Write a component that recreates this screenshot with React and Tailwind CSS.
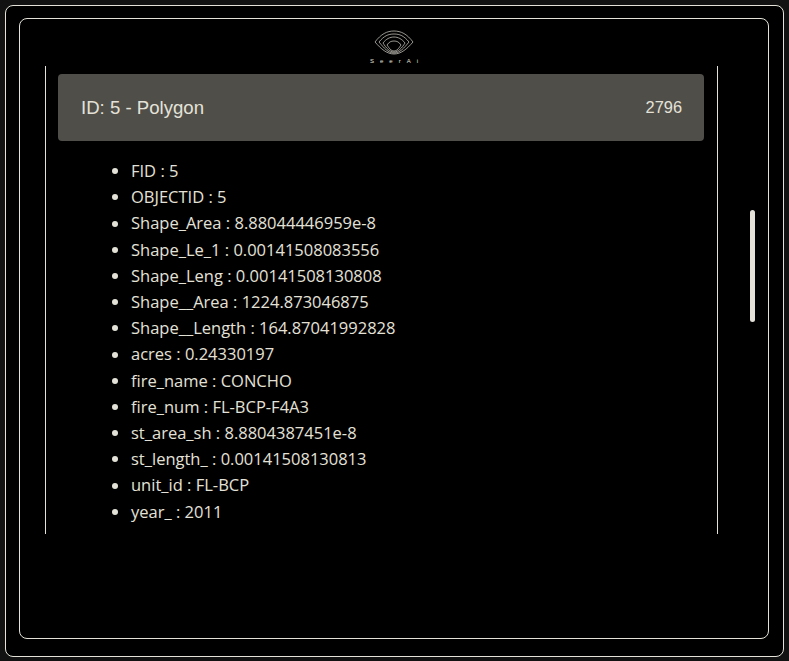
import React from 'react';

const attributes = [
  ['FID', '5'],
  ['OBJECTID', '5'],
  ['Shape_Area', '8.88044446959e-8'],
  ['Shape_Le_1', '0.00141508083556'],
  ['Shape_Leng', '0.00141508130808'],
  ['Shape__Area', '1224.873046875'],
  ['Shape__Length', '164.87041992828'],
  ['acres', '0.24330197'],
  ['fire_name', 'CONCHO'],
  ['fire_num', 'FL-BCP-F4A3'],
  ['st_area_sh', '8.8804387451e-8'],
  ['st_length_', '0.00141508130813'],
  ['unit_id', 'FL-BCP'],
  ['year_', '2011'],
];

const Logo = () => (
  <svg width="40" height="25" viewBox="0 0 40 25" fill="none" stroke="#d8d6cc" strokeWidth="0.7">
    <path d="M1 12 C7 4 13 1 20 1 C27 1 33 4 39 12 C33 19 27 24 20 24 C13 24 7 19 1 12 Z" />
    <path d="M5 12 C10 6 14 4 20 4 C26 4 30 6 35 12 C30 18 26 23 20 23 C14 23 10 18 5 12 Z" />
    <path d="M9 13 C12 9 16 7 20 7 C24 7 28 9 31 13 C28 18 24 22 20 22 C16 22 12 18 9 13 Z" />
    <path d="M13 15 C15 12 17 11 20 11 C23 11 25 12 27 15 C25 18 23 21 20 21 C17 21 15 18 13 15 Z" />
  </svg>
);

const App = () => {
  return (
    <div className="h-[661px] w-[789px] bg-[#121212] p-[5px] font-['Liberation_Sans',Arial,sans-serif] text-[#e4e2d8]">
      <div className="h-[652px] w-[779px] rounded-lg border border-[#e4e2d8] bg-black px-[13px] pt-3">
        <div className="flex h-[621px] w-[750px] flex-col items-center rounded-lg border border-[#e4e2d8]">
          <div className="mt-[11px] flex h-[36px] flex-col items-center">
            <Logo />
            <span className="ml-[6px] mt-[3px] text-[6px] leading-[6px] tracking-[6px]">SeerAi</span>
          </div>
          <div className="relative w-full flex-1">
            <div className="ml-[25px] h-[468px] w-[673px] border-x border-[#e4e2d8] pl-3 pr-[13px] pt-2">
              <div className="flex h-[67px] items-center justify-between rounded bg-[#4f4e49] pl-[23px] pr-[22px]">
                <span className="text-[18.6px]">ID: 5 - Polygon</span>
                <span className="text-[16.4px]">2796</span>
              </div>
              <ul className="mt-[17px] pl-[54px] font-['Open_Sans',sans-serif] text-[16.5px] leading-[26.2px]">
                {attributes.map(([key, value]) => (
                  <li key={key} className="flex items-center gap-[13px]">
                    <span className="h-[6px] w-[6px] rounded-full bg-[#e4e2d8]" />
                    <span>{key} : {value}</span>
                  </li>
                ))}
              </ul>
            </div>
            <div className="absolute left-[730px] top-[144px] h-[112px] w-[5px] rounded-full bg-[#e4e2d8]" />
          </div>
        </div>
      </div>
    </div>
  );
};

export default App;
